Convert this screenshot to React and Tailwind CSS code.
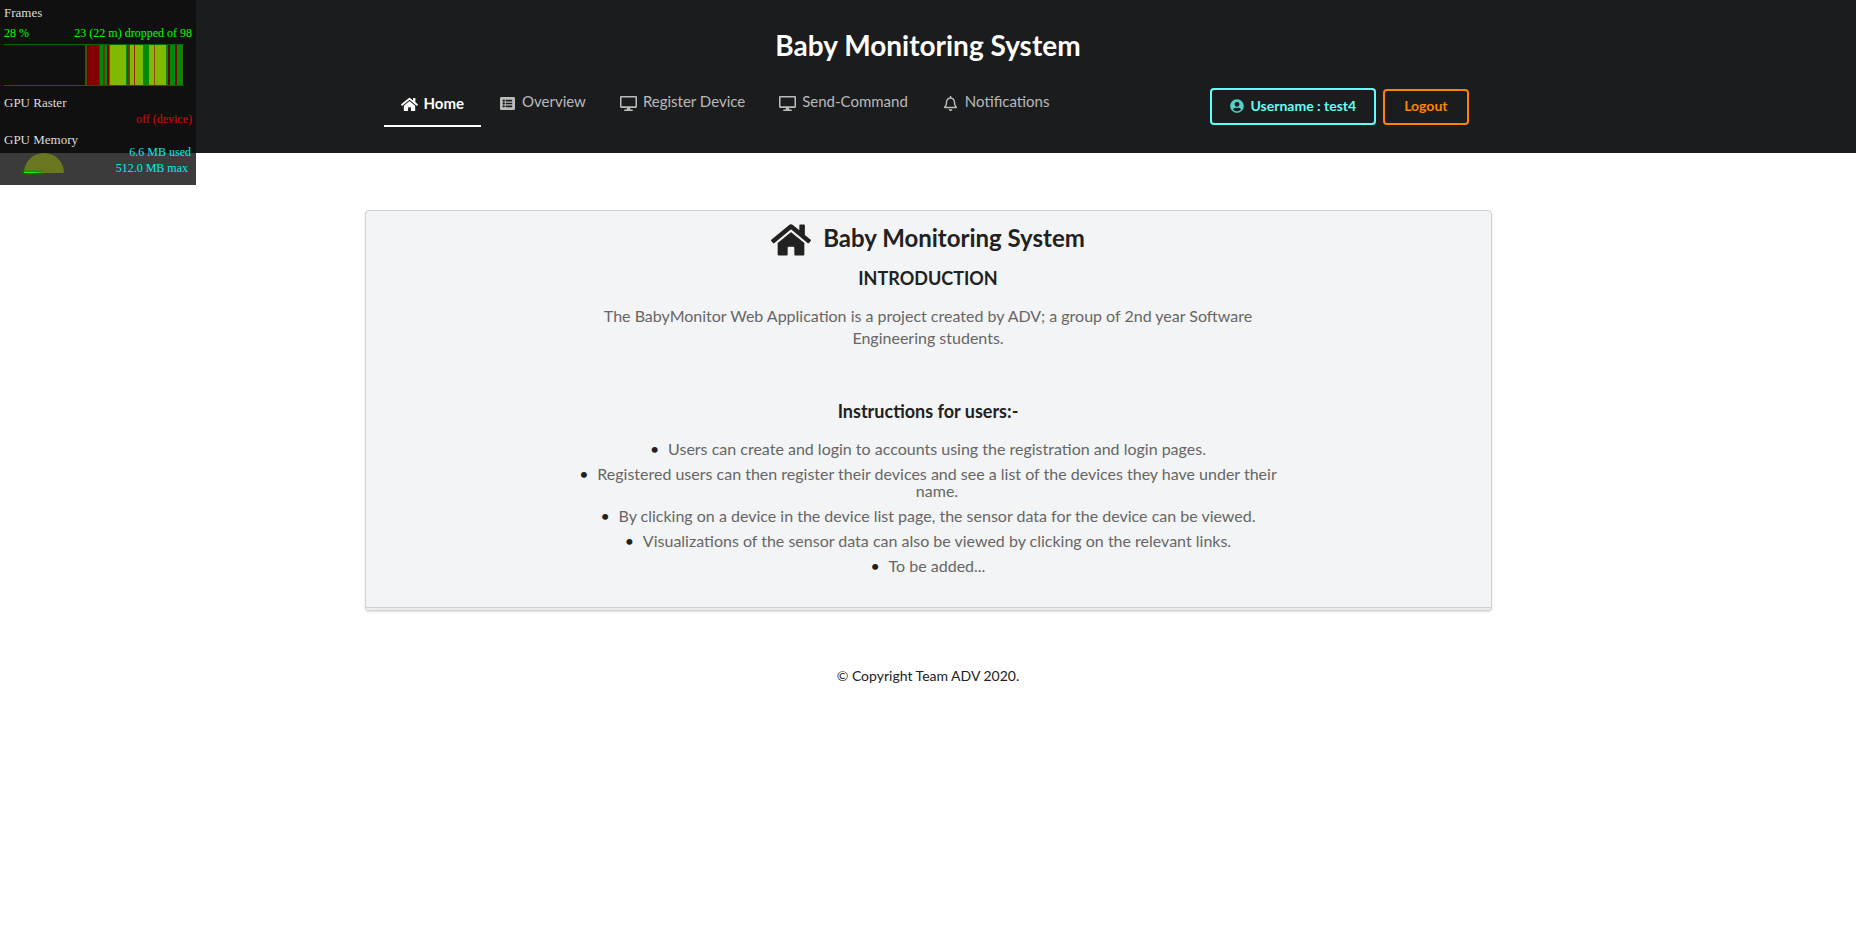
import { FaHome, FaListAlt, FaRegBell, FaUserCircle } from "react-icons/fa";

function MonitorIcon({ className }) {
  return (
    <svg className={className} viewBox="0 0 17 17" fill="currentColor" aria-hidden="true">
      <path
        fillRule="evenodd"
        d="M1.2 1h14.6c.7 0 1.2.5 1.2 1.2v9.6c0 .7-.5 1.2-1.2 1.2H1.2C.5 13 0 12.5 0 11.8V2.2C0 1.5.5 1 1.2 1zM1.5 2.5v8.8h14V2.5z"
      />
      <path d="M7 13h3l.4 1.6h1.7c.6 0 .9.3.9.7s-.3.7-.9.7H4.9c-.6 0-.9-.3-.9-.7s.3-.7.9-.7h1.7z" />
    </svg>
  );
}

const links = [
  { label: "Overview", Icon: FaListAlt, size: "size-[15px]" },
  { label: "Register Device", Icon: MonitorIcon, size: "size-[17px]" },
  { label: "Send-Command", Icon: MonitorIcon, size: "size-[17px]" },
  { label: "Notifications", Icon: FaRegBell, size: "size-[15px]" },
];

const instructions = [
  "Users can create and login to accounts using the registration and login pages.",
  "Registered users can then register their devices and see a list of the devices they have under their name.",
  "By clicking on a device in the device list page, the sensor data for the device can be viewed.",
  "Visualizations of the sensor data can also be viewed by clicking on the relevant links.",
  "To be added...",
];

// Each bar: [offset, width, colour]
const frameBars = [
  [0, 2, "#3f4f0a"], [2, 12, "#840000"], [14, 1, "#4a3a08"], [15, 3, "#008a0c"],
  [18, 2, "#5a4008"], [20, 2, "#008a0c"], [22, 2, "#840000"], [24, 1, "#3f6a0a"],
  [25, 16, "#7fba00"], [41, 1, "#008a0c"], [42, 2, "#5a4008"], [44, 1, "#008a0c"],
  [45, 4, "#7fba00"], [49, 1, "#a02000"], [50, 8, "#7fba00"], [58, 6, "#008a0c"],
  [64, 5, "#7fba00"], [69, 1, "#a04000"], [70, 11, "#7fba00"], [81, 2, "#008a0c"],
  [83, 2, "#700000"], [85, 5, "#008a0c"], [90, 2, "#840000"], [92, 5, "#008a0c"],
  [97, 1, "#3f6a0a"],
];

function StatsOverlay() {
  return (
    <aside className="absolute left-0 top-0 h-[185px] w-[196px] bg-[#0e0e0e]/81 px-1 pt-1 font-['Liberation_Serif',serif] text-[12px] leading-4">
      <p className="text-[13px] leading-[18px] text-[#dddddd]">Frames</p>
      <p className="mt-[3px] flex justify-between text-[#00ff00]">
        <span>28 %</span>
        <span>23 (22 m) dropped of 98</span>
      </p>
      <svg className="mt-[3px] block" width="180" height="42" viewBox="0 0 180 42" aria-hidden="true" shapeRendering="crispEdges">
        {frameBars.map(([x, w, fill]) => (
          <rect key={x} x={x + 81} y="1" width={w} height="40" fill={fill} />
        ))}
        <rect width="180" height="1" fill="#006400" />
        <rect y="41" width="180" height="1" fill="#006400" />
      </svg>
      <p className="mt-2 text-[13px] leading-[18px] text-[#dddddd]">GPU Raster</p>
      <p className="-mt-px text-right text-[#e00000]">off (device)</p>
      <p className="mt-1 text-[13px] leading-[18px] text-[#dddddd]">GPU Memory</p>
      <div className="flex items-start justify-between pl-[18px]">
        <svg className="mt-1" width="44" height="24" viewBox="0 0 44 24" aria-hidden="true">
          <defs>
            <linearGradient id="used">
              <stop offset="0" stopColor="#00ff00" />
              <stop offset="0.4" stopColor="#00ff00" />
              <stop offset="1" stopColor="#00ff00" stopOpacity="0.2" />
            </linearGradient>
          </defs>
          <path d="M2 20a20 20 0 0 1 40 0z" fill="#6a7720" />
          <rect y="17" width="22" height="5" fill="#008a0c" opacity=".3" />
          <rect x="2" y="19" width="20" height="1" fill="url(#used)" />
        </svg>
        <p className="-mt-[5px] pr-px text-right text-[#00ecec]">
          <span className="block">6.6 MB used</span>
          <span className="block pr-[3px]">512.0 MB max</span>
        </p>
      </div>
    </aside>
  );
}

export default function App() {
  return (
    <div className="relative bg-white font-[Lato,sans-serif] text-[14px] leading-5 text-[#212121]">
      <header className="bg-[#1b1c1d] pb-4 pt-[27px] text-white">
        <h1 className="text-center text-[28px] font-bold leading-9">Baby Monitoring System</h1>
        <nav className="mx-auto flex h-[74px] max-w-[1127px] items-start justify-between px-[19px]">
          <div className="flex items-start text-[15px] leading-5 text-white/70">
            <a
              href="#home"
              aria-current="page"
              className="mr-px mt-[19px] flex h-[45px] items-start gap-1.5 border-b-2 border-white px-[17px] pt-[11px] font-bold text-white"
            >
              <FaHome className="mt-[3px] size-[17px]" />
              Home
            </a>
            {links.map(({ label, Icon, size }) => (
              <a key={label} href={"#" + label.toLowerCase()} className="mt-7 flex items-start gap-1.5 px-[17px]">
                <span className="mt-1 flex size-[17px] shrink-0 items-center justify-center">
                  <Icon className={size} />
                </span>
                {label}
              </a>
            ))}
          </div>
          <div className="mt-[25px] flex items-end gap-[7px] pr-1 font-bold">
            <button type="button" className="flex h-[37px] items-center gap-[7px] rounded border-2 border-[#5ffff8] px-[18px] pb-0.5 text-[#5ffff8]">
              <FaUserCircle className="size-[14px] opacity-80" />
              Username : test4
            </button>
            <button type="button" className="flex h-9 items-center rounded border-2 border-[#ff8300] px-[19px] pb-0.5 text-[#ff8300]">
              Logout
            </button>
          </div>
        </nav>
      </header>

      <main className="mx-auto mt-[57px] max-w-[1127px]">
        <div className="rounded border border-[#d0d1d2] bg-[#f3f4f5] shadow-[0_1px_2px_rgba(34,36,38,0.15)]">
          <section className="mx-auto w-[62.5%] pb-[25px] pt-[9px] text-center">
            <h2 className="flex items-center justify-center gap-3 text-[24px] font-bold leading-9">
              <FaHome className="size-10" />
              <span className="pb-1">Baby Monitoring System</span>
            </h2>
            <h3 className="mt-1.5 text-[18px] font-bold leading-6">INTRODUCTION</h3>
            <p className="mt-[15px] text-[16px] leading-[22px] text-[#666666]">
              The BabyMonitor Web Application is a project created by ADV; a group of 2nd year Software Engineering students.
            </p>
            <h3 className="mt-[50px] text-[18px] font-bold leading-6">Instructions for users:-</h3>
            <ul className="mt-[17px] list-none pl-[18px] text-[16px] leading-[17px]">
              {instructions.map((text) => (
                <li key={text} className="mb-2 before:absolute before:-ml-[18px] before:content-['•']">
                  <span className="text-[#666666]">{text}</span>
                </li>
              ))}
            </ul>
          </section>
          <div className="h-[3px] rounded-b-sm border-t border-[#d0d1d2] bg-[#ececed]" />
        </div>
      </main>

      <footer className="mt-[55px] text-center">© Copyright Team ADV 2020.</footer>
      <StatsOverlay />
    </div>
  );
}
